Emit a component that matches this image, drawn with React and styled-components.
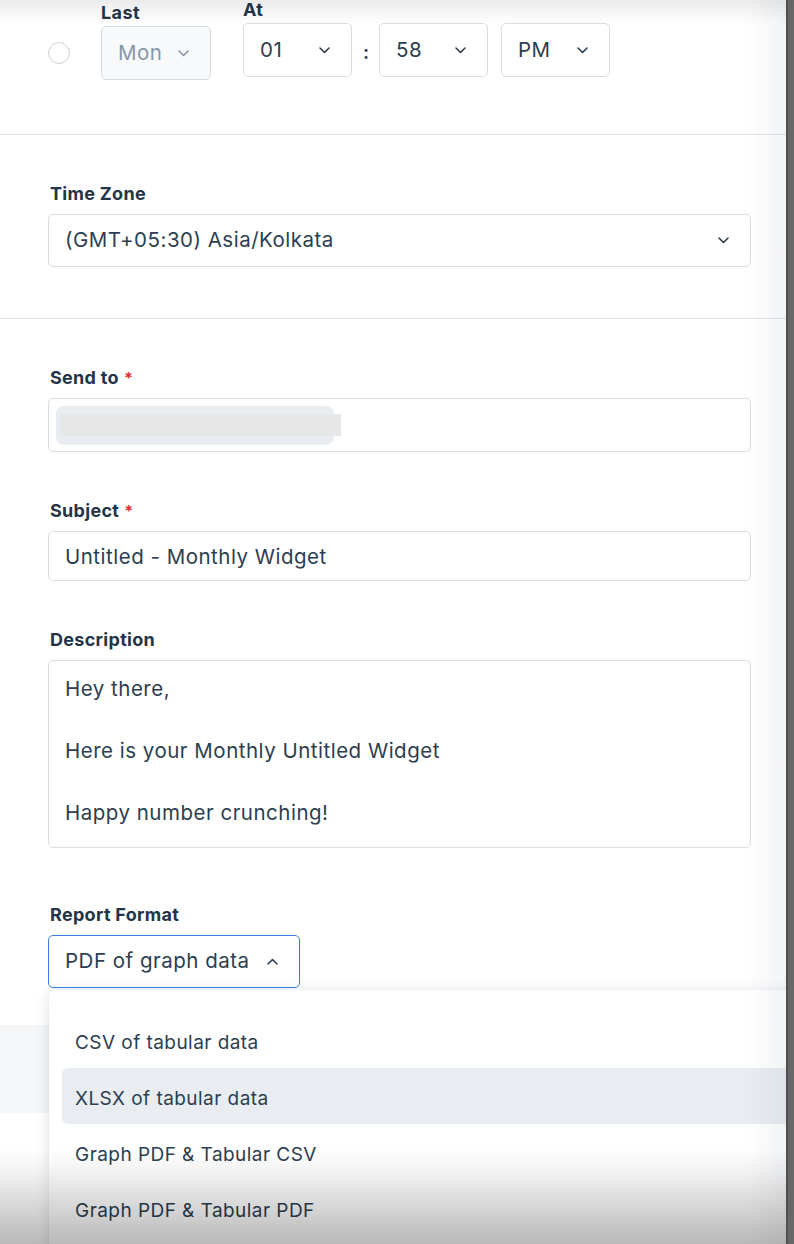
import React from "react";
import styled, { createGlobalStyle } from "styled-components";

const Global = createGlobalStyle`
  html, body { margin: 0; padding: 0; }
  body {
    font-family: Inter, "Noto Sans", "Liberation Sans", sans-serif;
    background: #5f5f5f;
    color: #2c3e50;
  }
`;

const Screen = styled.div`
  display: flex;
  width: 794px;
  height: 1244px;
  overflow: hidden;
`;

const Panel = styled.div`
  position: relative;
  width: 786px;
  height: 1244px;
  background: #ffffff;
  overflow: hidden;
`;

const Gutter = styled.div`
  width: 8px;
  background: #676767;
  border-left: 2px solid #505050;
  box-sizing: border-box;
`;

const Section = styled.div`
  padding: ${(p) => p.$pad || "0"};
  border-bottom: ${(p) => (p.$divider ? "1px solid #dfe2e7" : "none")};
  box-sizing: border-box;
  height: ${(p) => p.$h || "auto"};
`;

const TopRow = styled.div`
  display: flex;
  align-items: flex-start;
  padding-left: 48px;
  padding-top: 2px;
`;

const Radio = styled.span`
  width: 22px;
  height: 22px;
  border-radius: 50%;
  border: 1.5px solid #cdd2d9;
  box-sizing: border-box;
  margin-top: 40px;
  margin-right: 31px;
  flex-shrink: 0;
`;

const Column = styled.div`
  display: flex;
  flex-direction: column;
  gap: ${(p) => p.$gap || "5px"};
  margin-top: ${(p) => p.$top || "0px"};
  margin-right: ${(p) => p.$right || "0px"};
`;

const SmallLabel = styled.div`
  font-size: 18px;
  font-weight: 700;
  line-height: 16px;
  letter-spacing: 0.4px;
  color: #243447;
`;

const TimeRow = styled.div`
  display: flex;
  align-items: center;
  gap: 13px;
`;

const Colon = styled.span`
  width: 5px;
  margin: 4px -2px 0;
  font-size: 19px;
  font-weight: 600;
  color: #2c3e50;
`;

const Select = styled.div`
  display: flex;
  align-items: center;
  justify-content: space-between;
  box-sizing: border-box;
  width: ${(p) => p.$w || "100%"};
  height: ${(p) => p.$h || "54px"};
  padding: 0 21px 0 16px;
  border: 1px solid ${(p) => (p.$focus ? "#3d7fe0" : "#d8dde4")};
  border-radius: 5px;
  background: ${(p) => (p.$disabled ? "#f7f9fb" : "#ffffff")};
  color: ${(p) => (p.$disabled ? "#8696a6" : "#2c3e50")};
  font-size: 20.5px;
  letter-spacing: 0.5px;
  line-height: 1;
  white-space: nowrap;
`;

const Chevron = ({ up, muted }) => (
  <svg width="11" height="7" viewBox="0 0 11 7" fill="none">
    <path
      d={up ? "M1 6l4.5-4.5L10 6" : "M1 1l4.5 4.5L10 1"}
      stroke={muted ? "#8696a6" : "#2c3e50"}
      strokeWidth="1.6"
      strokeLinecap="round"
      strokeLinejoin="round"
    />
  </svg>
);

const Field = styled.div`
  display: flex;
  flex-direction: column;
  gap: ${(p) => p.$gap || "12px"};
  padding: 0 35px 0 48px;
  margin-top: ${(p) => p.$top || "0px"};
  position: relative;
`;

const Label = styled.div`
  font-size: 18px;
  font-weight: 700;
  line-height: 16px;
  letter-spacing: 0.3px;
  color: #243447;
  padding-left: 2px;
`;

const Req = styled.span`
  color: #e02f2f;
  margin-left: 5px;
  font-size: 16px;
`;

const Input = styled.div`
  display: flex;
  align-items: center;
  box-sizing: border-box;
  height: ${(p) => p.$h};
  padding: 0 16px;
  padding-left: ${(p) => p.$pl || "16px"};
  border: 1px solid #d8dde4;
  border-radius: 5px;
  background: #fff;
  font-size: 20.5px;
  letter-spacing: 0.5px;
  color: #2c3e50;
`;

const Chip = styled.div`
  display: flex;
  align-items: center;
  width: 278px;
  height: 39px;
  border-radius: 8px;
  background: #e9edf2;
  overflow: visible;
`;

const Redact = styled.div`
  flex-shrink: 0;
  width: 281px;
  height: 22px;
  margin-left: 4px;
  background: #e7e7e7;
`;

const TextArea = styled.div`
  box-sizing: border-box;
  height: 188px;
  padding: 12px 16px;
  border: 1px solid #d8dde4;
  border-radius: 5px;
  font-size: 20.5px;
  letter-spacing: 0.5px;
  line-height: 31px;
  color: #2c3e50;
`;

const Line = styled.div`
  height: 31px;
  white-space: nowrap;
`;

const ReportWrap = styled.div`
  position: relative;
  width: 252px;
`;

const Menu = styled.div`
  position: absolute;
  top: calc(100% + 2px);
  left: 1px;
  width: 760px;
  background: #fff;
  border-radius: 6px;
  box-shadow: 0 2px 14px rgba(30, 45, 70, 0.14), 0 0 1px rgba(30, 45, 70, 0.15);
  padding: 22px 0 40px 13px;
  box-sizing: border-box;
  z-index: 2;
`;

const MenuItem = styled.div`
  display: flex;
  align-items: center;
  box-sizing: border-box;
  height: 56px;
  padding: 5px 0 0 13px;
  border-radius: 6px;
  font-size: 19px;
  letter-spacing: 0.45px;
  color: #2c3e50;
  background: ${(p) => (p.$active ? "#e9edf2" : "transparent")};
`;

const FooterBand = styled.div`
  margin-top: 37px;
  height: 88px;
  background: #f4f6f8;
`;

const TopFade = styled.div`
  position: absolute;
  left: 0;
  right: 0;
  top: 0;
  height: 24px;
  background: linear-gradient(rgba(0, 0, 0, 0.08), rgba(0, 0, 0, 0));
  pointer-events: none;
  z-index: 5;
`;

const BottomFade = styled.div`
  position: absolute;
  left: 0;
  right: 0;
  bottom: 0;
  height: 96px;
  background: linear-gradient(rgba(0, 0, 0, 0), rgba(0, 0, 0, 0.05) 25%, rgba(0, 0, 0, 0.28));
  pointer-events: none;
  z-index: 5;
`;

const RightFade = styled.div`
  position: absolute;
  top: 0;
  bottom: 0;
  right: 0;
  width: 40px;
  background: linear-gradient(90deg, rgba(40, 60, 90, 0), rgba(40, 60, 90, 0.06));
  pointer-events: none;
  z-index: 5;
`;

export default function App() {
  return (
    <>
      <Global />
      <Screen>
        <Panel>
          <Section $divider $h="135px">
            <TopRow>
              <Radio />
              <Column $top="3px" $right="32px">
                <SmallLabel>Last</SmallLabel>
                <Select $w="110px" $h="54px" $disabled>
                  Mon
                  <Chevron muted />
                </Select>
              </Column>
              <Column>
                <SmallLabel>At</SmallLabel>
                <TimeRow>
                  <Select $w="109px">
                    01
                    <Chevron />
                  </Select>
                  <Colon>:</Colon>
                  <Select $w="109px">
                    58
                    <Chevron />
                  </Select>
                  <Select $w="109px">
                    PM
                    <Chevron />
                  </Select>
                </TimeRow>
              </Column>
            </TopRow>
          </Section>

          <Section $divider $pad="51px 0 0" $h="184px">
            <Field>
              <Label>Time Zone</Label>
              <Select $h="53px">
                (GMT+05:30) Asia/Kolkata
                <Chevron />
              </Select>
            </Field>
          </Section>

          <Section $pad="51px 0 0">
            <Field>
              <Label>
                Send to<Req>*</Req>
              </Label>
              <Input $h="54px" $pl="7px">
                <Chip>
                  <Redact />
                </Chip>
              </Input>
            </Field>
            <Field $top="51px">
              <Label>
                Subject<Req>*</Req>
              </Label>
              <Input $h="50px">Untitled - Monthly Widget</Input>
            </Field>
            <Field $top="51px">
              <Label>Description</Label>
              <TextArea>
                <Line>Hey there,</Line>
                <Line />
                <Line>Here is your Monthly Untitled Widget</Line>
                <Line />
                <Line>Happy number crunching!</Line>
              </TextArea>
            </Field>
            <Field $top="59px">
              <Label>Report Format</Label>
              <ReportWrap>
                <Select $h="53px" $focus>
                  PDF of graph data
                  <Chevron up />
                </Select>
                <Menu>
                  <MenuItem>CSV of tabular data</MenuItem>
                  <MenuItem $active>XLSX of tabular data</MenuItem>
                  <MenuItem>Graph PDF &amp; Tabular CSV</MenuItem>
                  <MenuItem>Graph PDF &amp; Tabular PDF</MenuItem>
                </Menu>
              </ReportWrap>
            </Field>
            <FooterBand />
          </Section>

          <TopFade />
          <RightFade />
          <BottomFade />
        </Panel>
        <Gutter />
      </Screen>
    </>
  );
}
